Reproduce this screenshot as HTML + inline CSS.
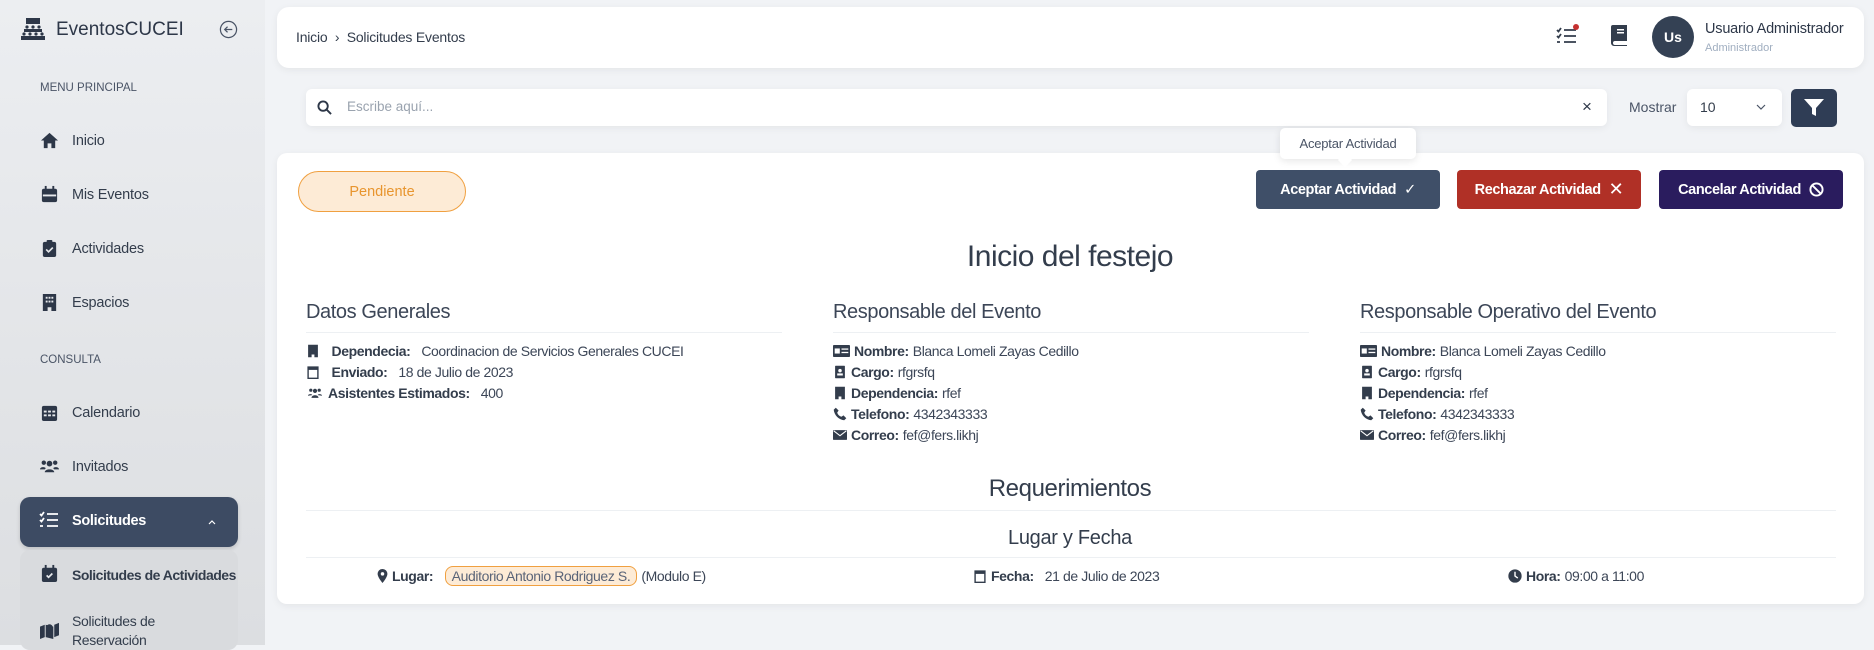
<!DOCTYPE html>
<html><head><meta charset="utf-8"><style>
*{box-sizing:border-box;margin:0;padding:0}
body{width:1874px;height:645px;overflow:hidden;background:#f1f3f6;font-family:"Liberation Sans",sans-serif;color:#3c4657;position:relative}
.a{position:absolute;white-space:nowrap}
#side{position:absolute;left:0;top:0;width:265px;height:645px;background:linear-gradient(180deg,#eceef1,#e2e4e7 60%,#dcdee1);}
.sec{font-size:11.5px;color:#4a5466;left:40px}
.it{font-size:14.5px;color:#333d4c;left:72px;letter-spacing:-.2px}
.ic{left:40px;width:19px;height:19px}
.card{position:absolute;background:#fff;border-radius:12px;box-shadow:0 2px 8px rgba(0,0,0,.06)}
.btn{position:absolute;top:170px;height:39px;width:184px;border-radius:4px;color:#fff;font-weight:bold;font-size:14.5px;display:flex;align-items:center;justify-content:center;gap:8px;letter-spacing:-.4px}
.h{font-size:20px;color:#3c4657;letter-spacing:-.4px}
.ln{position:absolute;height:1px;background:#edf0f3}
.r{font-size:14px;color:#3c4657;letter-spacing:-.4px;display:flex;align-items:center;gap:4px}
.r b{color:#333d4c}
.r svg{width:14px;height:14px;fill:#333d4c}
</style></head><body>
<div id="side">
 <svg class="a" style="left:21px;top:18px" width="24" height="24" viewBox="0 0 24 24" fill="#2d3748"><rect x="5" y="0" width="14" height="6"/><g><circle cx="6" cy="9" r="1.6"/><circle cx="12" cy="9" r="1.6"/><circle cx="18" cy="9" r="1.6"/><rect x="3" y="11" width="18" height="3"/><circle cx="3" cy="16" r="1.6"/><circle cx="9" cy="16" r="1.6"/><circle cx="15" cy="16" r="1.6"/><circle cx="21" cy="16" r="1.6"/><rect x="0" y="18" width="24" height="4"/></g></svg>
 <div class="a" style="left:56px;top:19px;font-size:19px;color:#2d3748">EventosCUCEI</div>
 <svg class="a" style="left:219px;top:20px" width="19" height="19" viewBox="0 0 20 20" fill="none" stroke="#4a5466" stroke-width="1.3"><circle cx="10" cy="10" r="8.5"/><path d="M14 10H6M9 7l-3 3 3 3"/></svg>
 <div class="a sec" style="top:82px">MENU PRINCIPAL</div>
 <svg class="a ic" style="top:131px" viewBox="0 0 20 20" fill="#2d3748"><path d="M10 2L1 10h3v8h4v-5h4v5h4v-8h3z"/></svg>
 <div class="a it" style="top:133px">Inicio</div>
 <svg class="a ic" style="top:185px" viewBox="0 0 20 20" fill="#2d3748"><rect x="2" y="4" width="16" height="14" rx="2"/><rect x="5" y="1" width="2" height="4"/><rect x="13" y="1" width="2" height="4"/><rect x="3" y="10" width="14" height="2" fill="#e6e8eb"/></svg>
 <div class="a it" style="top:187px">Mis Eventos</div>
 <svg class="a ic" style="top:239px" viewBox="0 0 20 20" fill="#2d3748"><rect x="3" y="3" width="14" height="16" rx="2"/><rect x="7" y="1" width="6" height="4" rx="1"/><path d="M6.5 11l2.5 2.5 4.5-4.5" stroke="#e6e8eb" stroke-width="1.8" fill="none"/></svg>
 <div class="a it" style="top:241px">Actividades</div>
 <svg class="a ic" style="top:293px" viewBox="0 0 20 20" fill="#2d3748"><path d="M3 1h14v18h-5v-4h-4v4H3z"/><g fill="#e6e8eb"><rect x="6" y="4" width="2" height="2"/><rect x="9" y="4" width="2" height="2"/><rect x="12" y="4" width="2" height="2"/><rect x="6" y="8" width="2" height="2"/><rect x="9" y="8" width="2" height="2"/><rect x="12" y="8" width="2" height="2"/></g></svg>
 <div class="a it" style="top:295px">Espacios</div>
 <div class="a sec" style="top:354px">CONSULTA</div>
 <svg class="a ic" style="top:403px" viewBox="0 0 20 20" fill="#2d3748"><rect x="2" y="3" width="16" height="16" rx="2"/><g fill="#e6e8eb"><rect x="4" y="8" width="3" height="2"/><rect x="8.5" y="8" width="3" height="2"/><rect x="13" y="8" width="3" height="2"/><rect x="4" y="12" width="3" height="2"/><rect x="8.5" y="12" width="3" height="2"/><rect x="13" y="12" width="3" height="2"/></g></svg>
 <div class="a it" style="top:405px">Calendario</div>
 <svg class="a ic" style="top:457px" viewBox="0 0 20 20" fill="#2d3748"><circle cx="10" cy="7" r="3"/><circle cx="4" cy="6" r="2.3"/><circle cx="16" cy="6" r="2.3"/><path d="M5 16c0-4 10-4 10 0zM0 13c0-3 6-3 6-1l-1 1zM20 13c0-3-6-3-6-1l1 1z"/></svg>
 <div class="a it" style="top:459px">Invitados</div>
 <div class="a" style="left:20px;top:497px;width:218px;height:50px;background:#3d4b63;border-radius:10px;box-shadow:0 2px 4px rgba(0,0,0,.15)"></div>
 <svg class="a" style="left:39px;top:511px" width="20" height="18" viewBox="0 0 20 18" stroke="#fff" stroke-width="1.8" fill="none"><path d="M1 3l1.5 1.5L5 1M1 9l1.5 1.5L5 7M1 15h3M8 3h11M8 9h11M8 15h11"/></svg>
 <div class="a" style="left:72px;top:513px;font-size:14.5px;font-weight:bold;color:#fff;letter-spacing:-.3px">Solicitudes</div>
 <svg class="a" style="left:207px;top:518px" width="10" height="8" viewBox="0 0 10 8" stroke="#fff" fill="none" stroke-width="1.2"><path d="M2 6l3-3 3 3"/></svg>
 <div class="a" style="left:20px;top:550px;width:218px;height:100px;background:#d9dbde;border-radius:10px"></div>
 <svg class="a ic" style="top:564px" viewBox="0 0 20 20" fill="#2d3748"><rect x="2" y="4" width="16" height="15" rx="2"/><rect x="5" y="1" width="2" height="4"/><rect x="13" y="1" width="2" height="4"/><path d="M7 12l2 2 4-4" stroke="#e6e8eb" stroke-width="1.8" fill="none"/></svg>
 <div class="a" style="left:72px;top:567px;font-size:14px;font-weight:bold;color:#333d4c;letter-spacing:-.5px">Solicitudes de Actividades</div>
 <svg class="a ic" style="top:620px" viewBox="0 0 20 20" fill="#2d3748"><path d="M0 7l5-2v13l-5 2zM15 5l5-2v13l-5 2zM6 5l8 2v13l-8-2z"/><circle cx="10" cy="8" r="3.5"/></svg>
 <div class="a" style="left:72px;top:612px;font-size:14px;color:#333d4c;line-height:19px;letter-spacing:-.3px">Solicitudes de<br>Reservación</div>
</div>

<div class="card" style="left:277px;top:7px;width:1587px;height:61px"></div>
<div class="a" style="left:296px;top:29px;font-size:14px;color:#333d4c;letter-spacing:-.2px">Inicio &nbsp;›&nbsp; Solicitudes Eventos</div>
<svg class="a" style="left:1556px;top:24px" width="24" height="22" viewBox="0 0 24 22" stroke="#333d4c" stroke-width="1.8" fill="none"><path d="M1 6l1.5 1.5L5 4M1 12l1.5 1.5L5 10M1 18h3M8 6h12M8 12h12M8 18h12"/><circle cx="20" cy="3" r="3" fill="#c53030" stroke="none"/></svg>
<svg class="a" style="left:1611px;top:24px" width="17" height="22" viewBox="0 0 17 22" fill="#333d4c"><path d="M2 1h14v16H4a2 2 0 000 4h12v1H3a3 3 0 01-3-3V3a2 2 0 012-2z"/><rect x="6" y="5" width="7" height="1.5" fill="#fff"/><rect x="6" y="8" width="7" height="1.5" fill="#fff"/></svg>
<div class="a" style="left:1652px;top:16px;width:42px;height:42px;border-radius:50%;background:#344154;color:#fff;font-weight:bold;font-size:14px;display:flex;align-items:center;justify-content:center">Us</div>
<div class="a" style="left:1705px;top:21px;font-size:14.5px;color:#2d3748;letter-spacing:-.2px">Usuario Administrador</div>
<div class="a" style="left:1705px;top:42px;font-size:11px;color:#a0aec0">Administrador</div>

<div class="card" style="left:306px;top:89px;width:1301px;height:37px;border-radius:6px"></div>
<svg class="a" style="left:317px;top:100px" width="15" height="15" viewBox="0 0 16 16" stroke="#2d3748" stroke-width="2" fill="none"><circle cx="6.5" cy="6.5" r="5"/><path d="M10.5 10.5L15 15"/></svg>
<div class="a" style="left:347px;top:99px;font-size:13.5px;color:#9aa3af">Escribe aquí...</div>
<div class="a" style="left:1582px;top:97px;font-size:17px;color:#2d3748">×</div>
<div class="a" style="left:1629px;top:99px;font-size:14px;color:#4a5466">Mostrar</div>
<div class="card" style="left:1687px;top:89px;width:95px;height:37px;border-radius:6px"></div>
<div class="a" style="left:1700px;top:99px;font-size:14px;color:#333d4c">10</div>
<svg class="a" style="left:1756px;top:104px" width="10" height="7" viewBox="0 0 10 7" stroke="#4a5466" fill="none" stroke-width="1.2"><path d="M1 1l4 4 4-4"/></svg>
<div class="a" style="left:1791px;top:89px;width:46px;height:38px;border-radius:5px;background:#2f3d55"></div>
<svg class="a" style="left:1804px;top:99px" width="20" height="18" viewBox="0 0 20 18" fill="#fff"><path d="M0 0h20l-8 9v8l-4-2V9z"/></svg>

<div class="card" style="left:277px;top:153px;width:1587px;height:451px;border-radius:10px"></div>
<div class="a" style="left:1280px;top:128px;width:136px;height:31px;background:#fff;border-radius:5px;box-shadow:0 2px 8px rgba(0,0,0,.1);font-size:13px;color:#4a5466;display:flex;align-items:center;justify-content:center;letter-spacing:-.2px">Aceptar Actividad</div>
<div class="a" style="left:1340px;top:155px;width:10px;height:10px;background:#fff;transform:rotate(45deg)"></div>
<div class="a" style="left:298px;top:171px;width:168px;height:41px;border-radius:21px;background:#fdebd6;border:1px solid #f0a040;color:#e8952e;font-size:14.5px;display:flex;align-items:center;justify-content:center">Pendiente</div>
<div class="btn" style="left:1256px;background:#3f4f68">Aceptar Actividad <span style="font-weight:normal">✓</span></div>
<div class="btn" style="left:1457px;background:#b03026">Rechazar Actividad <span style="font-weight:normal;font-size:18px">✕</span></div>
<div class="btn" style="left:1659px;background:#2a1c5e">Cancelar Actividad <svg width="15" height="15" viewBox="0 0 16 16" stroke="#fff" stroke-width="2" fill="none"><circle cx="8" cy="8" r="6.5"/><path d="M3.5 3.5l9 9"/></svg></div>

<div class="a" style="left:777px;width:586px;text-align:center;top:240px;font-size:30px;color:#333d4c;letter-spacing:-.5px">Inicio del festejo</div>

<div class="a h" style="left:306px;top:301px">Datos Generales</div>
<div class="ln" style="left:306px;top:332px;width:476px"></div>
<div class="a h" style="left:833px;top:301px">Responsable del Evento</div>
<div class="ln" style="left:833px;top:332px;width:476px"></div>
<div class="a h" style="left:1360px;top:301px">Responsable Operativo del Evento</div>
<div class="ln" style="left:1360px;top:332px;width:476px"></div>

<div class="a r" style="left:306px;top:343px"><svg viewBox="0 0 20 20"><path d="M3 1h14v18h-5v-4h-4v4H3z"/></svg>&nbsp;<b>Dependecia:</b>&nbsp; Coordinacion de Servicios Generales CUCEI</div>
<div class="a r" style="left:306px;top:364px"><svg viewBox="0 0 20 20"><path d="M3 3h14v16H3z" fill="none" stroke="#333d4c" stroke-width="2"/><rect x="3" y="3" width="14" height="4"/></svg>&nbsp;<b>Enviado:</b>&nbsp; 18 de Julio de 2023</div>
<div class="a r" style="left:306px;top:385px"><svg viewBox="0 0 20 20" style="width:18px"><circle cx="10" cy="7" r="3"/><circle cx="4" cy="6" r="2.3"/><circle cx="16" cy="6" r="2.3"/><path d="M5 17c0-5 10-5 10 0zM0 14c0-3 6-3 6-1zM20 14c0-3-6-3-6-1z"/></svg><b>Asistentes Estimados:</b>&nbsp; 400</div>

<div class="a r" style="left:833px;top:343px"><svg viewBox="0 0 20 16" style="width:17px"><rect x="0" y="1" width="20" height="14" rx="1"/><rect x="2" y="5" width="6" height="6" fill="#fff"/><rect x="10" y="5" width="8" height="1.5" fill="#fff"/><rect x="10" y="9" width="8" height="1.5" fill="#fff"/></svg><b>Nombre:</b> Blanca Lomeli Zayas Cedillo</div>
<div class="a r" style="left:833px;top:364px"><svg viewBox="0 0 16 20"><rect x="1" y="1" width="14" height="18" rx="1"/><circle cx="8" cy="8" r="2.5" fill="#fff"/><rect x="4" y="12" width="8" height="3" fill="#fff"/></svg><b>Cargo:</b> rfgrsfq</div>
<div class="a r" style="left:833px;top:385px"><svg viewBox="0 0 20 20"><path d="M3 1h14v18h-5v-4h-4v4H3z"/></svg><b>Dependencia:</b> rfef</div>
<div class="a r" style="left:833px;top:406px"><svg viewBox="0 0 20 20"><path d="M4 1l4 4-2 3c1 3 3 5 6 6l3-2 4 4-3 3C8 18 2 12 1 4z"/></svg><b>Telefono:</b> 4342343333</div>
<div class="a r" style="left:833px;top:427px"><svg viewBox="0 0 20 16"><rect x="0" y="1" width="20" height="14" rx="1"/><path d="M1 2l9 7 9-7" stroke="#fff" stroke-width="1.5" fill="none"/></svg><b>Correo:</b> fef@fers.likhj</div>

<div class="a r" style="left:1360px;top:343px"><svg viewBox="0 0 20 16" style="width:17px"><rect x="0" y="1" width="20" height="14" rx="1"/><rect x="2" y="5" width="6" height="6" fill="#fff"/><rect x="10" y="5" width="8" height="1.5" fill="#fff"/><rect x="10" y="9" width="8" height="1.5" fill="#fff"/></svg><b>Nombre:</b> Blanca Lomeli Zayas Cedillo</div>
<div class="a r" style="left:1360px;top:364px"><svg viewBox="0 0 16 20"><rect x="1" y="1" width="14" height="18" rx="1"/><circle cx="8" cy="8" r="2.5" fill="#fff"/><rect x="4" y="12" width="8" height="3" fill="#fff"/></svg><b>Cargo:</b> rfgrsfq</div>
<div class="a r" style="left:1360px;top:385px"><svg viewBox="0 0 20 20"><path d="M3 1h14v18h-5v-4h-4v4H3z"/></svg><b>Dependencia:</b> rfef</div>
<div class="a r" style="left:1360px;top:406px"><svg viewBox="0 0 20 20"><path d="M4 1l4 4-2 3c1 3 3 5 6 6l3-2 4 4-3 3C8 18 2 12 1 4z"/></svg><b>Telefono:</b> 4342343333</div>
<div class="a r" style="left:1360px;top:427px"><svg viewBox="0 0 20 16"><rect x="0" y="1" width="20" height="14" rx="1"/><path d="M1 2l9 7 9-7" stroke="#fff" stroke-width="1.5" fill="none"/></svg><b>Correo:</b> fef@fers.likhj</div>

<div class="a" style="left:777px;width:586px;text-align:center;top:475px;font-size:24px;color:#333d4c;letter-spacing:-.4px">Requerimientos</div>
<div class="ln" style="left:306px;top:510px;width:1530px"></div>
<div class="a" style="left:777px;width:586px;text-align:center;top:527px;font-size:20px;color:#333d4c;letter-spacing:-.3px">Lugar y Fecha</div>
<div class="ln" style="left:306px;top:557px;width:1530px"></div>

<div class="a r" style="left:377px;top:566px"><svg viewBox="0 0 14 20" style="width:11px"><path d="M7 0a7 7 0 00-7 7c0 5 7 13 7 13s7-8 7-13a7 7 0 00-7-7z"/><circle cx="7" cy="7" r="2.5" fill="#fff"/></svg><b>Lugar:</b>&nbsp;<span style="border:1px solid #f0a040;background:#fdebd6;border-radius:8px;padding:1px 6px;color:#5a6478">Auditorio Antonio Rodriguez S.</span>(Modulo E)</div>
<div class="a r" style="left:973px;top:568px"><svg viewBox="0 0 20 20"><path d="M3 3h14v16H3z" fill="none" stroke="#333d4c" stroke-width="2"/><rect x="3" y="3" width="14" height="4"/></svg><b>Fecha:</b>&nbsp; 21 de Julio de 2023</div>
<div class="a r" style="left:1508px;top:568px"><svg viewBox="0 0 20 20"><circle cx="10" cy="10" r="9.5"/><path d="M10 4v6l4 3" stroke="#fff" stroke-width="2" fill="none"/></svg><b>Hora:</b> 09:00 a 11:00</div>
</body></html>
